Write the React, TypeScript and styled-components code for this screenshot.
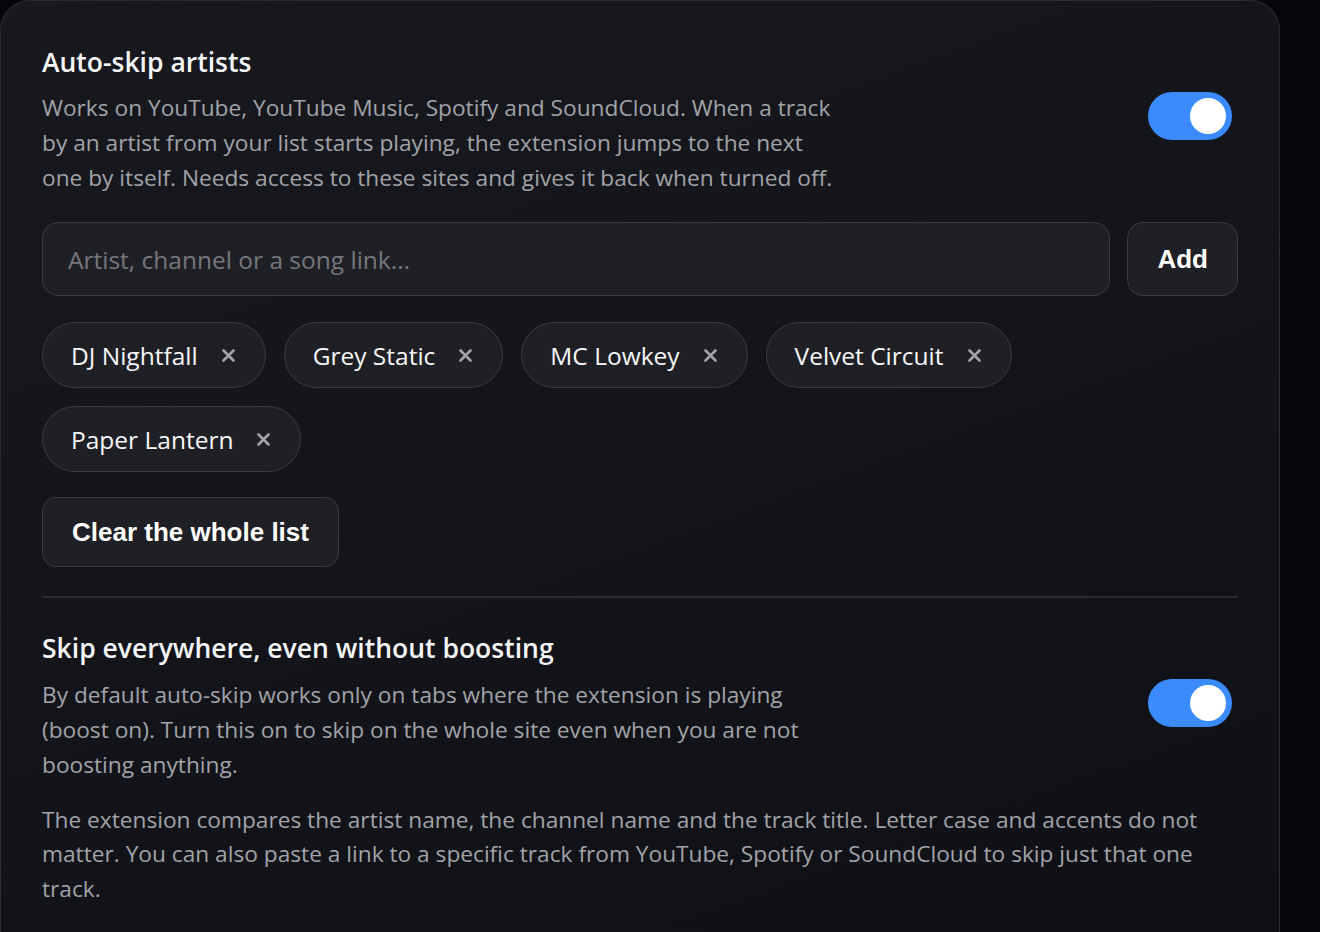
import { createGlobalStyle, styled } from "styled-components";

const GlobalStyle = createGlobalStyle`
  html, body {
    margin: 0;
    padding: 0;
    background: #05060a;
  }
  body {
    font-family: "Open Sans", "Noto Sans", "DejaVu Sans", sans-serif;
    color: #f3f4f6;
  }
`;

const Page = styled.div`
  width: 1320px;
  height: 932px;
  overflow: hidden;
`;

const Card = styled.div`
  width: 1280px;
  min-height: 1000px;
  box-sizing: border-box;
  padding: 44px 41px 40px 41px;
  border: 1px solid #2b2c32;
  border-bottom: none;
  border-radius: 30px 30px 0 0;
  background: linear-gradient(160deg, #18191e 0%, #131419 55%, #0f1015 100%);
`;

const Row = styled.div`
  display: flex;
  align-items: center;
  justify-content: space-between;
  gap: 24px;
`;

const TextBlock = styled.div`
  max-width: 805px;
`;

const Title = styled.h2`
  margin: 0 0 11px 0;
  font-size: 26.5px;
  font-weight: 600;
  line-height: 1.3;
  color: #f5f6f8;
`;

const Desc = styled.p<{ $wide?: boolean }>`
  margin: 0;
  font-size: 22.7px;
  line-height: 35px;
  color: #a1a3a9;
  max-width: ${(p) => (p.$wide ? "none" : "805px")};
`;

const Toggle = styled.div<{ $on: boolean }>`
  flex: none;
  width: 84px;
  height: 48px;
  margin: 0 6px 8px 0;
  border-radius: 24px;
  background: ${(p) => (p.$on ? "#3b8bff" : "#3a3b41")};
  display: flex;
  align-items: center;
  justify-content: ${(p) => (p.$on ? "flex-end" : "flex-start")};
  padding: 0 6px;
  box-sizing: border-box;
`;

const Knob = styled.div`
  width: 36px;
  height: 36px;
  border-radius: 50%;
  background: #ffffff;
`;

const InputRow = styled.div`
  display: flex;
  gap: 17px;
  margin-top: 27px;
`;

const Input = styled.input`
  flex: 1;
  height: 74px;
  box-sizing: border-box;
  padding: 0 25px;
  border: 1.5px solid #3a3b41;
  border-radius: 16px;
  background: #1f2025;
  color: #f3f4f6;
  font-family: inherit;
  font-size: 24.5px;
  outline: none;
  &::placeholder {
    color: #76777d;
  }
`;

const Button = styled.button`
  height: 74px;
  box-sizing: border-box;
  padding: 0 29px;
  border: 1.5px solid #3a3b41;
  border-radius: 16px;
  background: #1f2025;
  color: #ffffff;
  font-family: "Liberation Sans", Arial, sans-serif;
  font-weight: 700;
  font-size: 26px;
  cursor: pointer;
`;

const ClearButton = styled(Button)`
  height: 70px;
  margin-top: 25px;
  padding: 0 29px;
  border-radius: 14px;
`;

const Chips = styled.div`
  display: flex;
  flex-wrap: wrap;
  gap: 18px;
  margin-top: 26px;
`;

const Chip = styled.div`
  display: flex;
  align-items: center;
  gap: 24px;
  height: 66px;
  box-sizing: border-box;
  padding: 0 30px 0 28px;
  border: 1.5px solid #3a3b41;
  border-radius: 33px;
  background: #1f2025;
  font-size: 24.5px;
  color: #f7f7f9;
`;

const Remove = styled.span`
  display: flex;
  color: #a2a3a8;
`;

const Divider = styled.hr`
  margin: 29px 0 33px 0;
  border: none;
  border-top: 2px solid #2a2b30;
`;

const Note = styled(Desc)`
  margin-top: 21px;
  line-height: 34.5px;
`;

const artists = ["DJ Nightfall", "Grey Static", "MC Lowkey", "Velvet Circuit", "Paper Lantern"];

function CloseIcon() {
  return (
    <svg width="13" height="13" viewBox="0 0 13 13">
      <path d="M1.5 1.5 L11.5 11.5 M11.5 1.5 L1.5 11.5" stroke="currentColor" strokeWidth="2.6" strokeLinecap="round" />
    </svg>
  );
}

export default function App() {
  return (
    <Page>
      <GlobalStyle />
      <Card>
        <Row>
          <TextBlock>
            <Title>Auto-skip artists</Title>
            <Desc>
              Works on YouTube, YouTube Music, Spotify and SoundCloud. When a track by an artist from your list
              starts playing, the extension jumps to the next one by itself. Needs access to these sites and gives
              it back when turned off.
            </Desc>
          </TextBlock>
          <Toggle $on>
            <Knob />
          </Toggle>
        </Row>

        <InputRow>
          <Input placeholder="Artist, channel or a song link..." />
          <Button>Add</Button>
        </InputRow>

        <Chips>
          {artists.map((a) => (
            <Chip key={a}>
              {a}
              <Remove>
                <CloseIcon />
              </Remove>
            </Chip>
          ))}
        </Chips>

        <ClearButton>Clear the whole list</ClearButton>

        <Divider />

        <Row>
          <TextBlock>
            <Title>Skip everywhere, even without boosting</Title>
            <Desc>
              By default auto-skip works only on tabs where the extension is playing (boost on). Turn this on to
              skip on the whole site even when you are not boosting anything.
            </Desc>
          </TextBlock>
          <Toggle $on>
            <Knob />
          </Toggle>
        </Row>

        <Note $wide>
          The extension compares the artist name, the channel name and the track title. Letter case and accents do
          not matter. You can also paste a link to a specific track from YouTube, Spotify or SoundCloud to skip just
          that one track.
        </Note>
      </Card>
    </Page>
  );
}
